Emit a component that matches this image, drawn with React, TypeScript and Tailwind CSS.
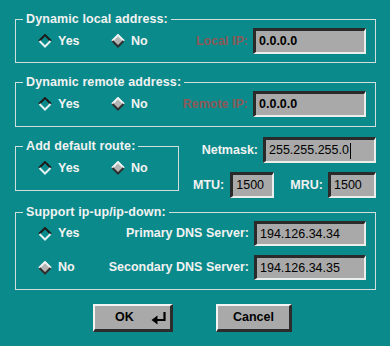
import React from 'react';

function Diamond({ checked }: { checked: boolean }) {
  if (checked) {
    return (
      <svg width="14" height="14" viewBox="0 0 14 14" className="shrink-0">
        <polygon points="7,1 13,7 7,13 1,7" fill="#0a8a8a" />
        <polyline points="1,7 7,1 13,7" fill="none" stroke="#1c1c1c" strokeWidth="2" />
        <polyline points="1.5,7 7,12.5 12.5,7" fill="none" stroke="#e6f2f2" strokeWidth="2" />
      </svg>
    );
  }
  return (
    <svg width="14" height="14" viewBox="0 0 14 14" className="shrink-0">
      <polygon points="7,1 13,7 7,13 1,7" fill="#b4b4b4" />
      <polyline points="1,7 7,1 13,7" fill="none" stroke="#f2f2f2" strokeWidth="2" />
      <polyline points="1.5,7 7,12.5 12.5,7" fill="none" stroke="#2e2e2e" strokeWidth="2" />
    </svg>
  );
}

function Radio({ checked, label, className = '' }: { checked: boolean; label: string; className?: string }) {
  return (
    <div className={`flex items-center ${className}`}>
      <Diamond checked={checked} />
      <span className="ml-[6px] text-[#f2f2f2] font-bold">{label}</span>
    </div>
  );
}

function Field({
  value,
  className = '',
  bold = false,
  cursor = false,
  h = 'h-[26px]',
}: {
  value: string;
  className?: string;
  bold?: boolean;
  cursor?: boolean;
  h?: string;
}) {
  return (
    <div
      className={`flex items-center ${h} bg-[#a9a9a9] border-t-[3px] border-l-[3px] border-t-[#2a2a2a] border-l-[#2a2a2a] border-b-2 border-r-2 border-b-[#ebefeb] border-r-[#ebefeb] pl-[3px] text-black ${
        bold ? 'font-bold' : ''
      } ${className}`}
    >
      <span>{value}</span>
      {cursor && <span className="ml-[1px] inline-block w-[1px] h-[16px] bg-black" />}
    </div>
  );
}

function Group({
  title,
  className = '',
  children,
  pb = 'pb-[8px]',
}: {
  title: string;
  className?: string;
  children: React.ReactNode;
  pb?: string;
}) {
  return (
    <fieldset className={`border border-[#d2dede] pt-[1px] ${pb} ${className}`}>
      <legend className="ml-[7px] px-[3px] h-[15px] leading-[15px] text-[#f2f2f2] font-bold tracking-[0.1px]">
        {title}
      </legend>
      {children}
    </fieldset>
  );
}

function ReturnIcon() {
  return (
    <svg width="16" height="14" viewBox="0 0 16 14">
      <path d="M13.5 1 V9 H5" fill="none" stroke="#000" strokeWidth="2.2" />
      <polygon points="0.5,9 6.5,4.5 6.5,13.5" fill="#000" />
    </svg>
  );
}

function Button({ children, className = '' }: { children: React.ReactNode; className?: string }) {
  return (
    <div
      className={`h-[28px] bg-[#a9a9a9] border-t-2 border-l-2 border-t-[#f4f4f4] border-l-[#f4f4f4] border-b-[3px] border-r-[3px] border-b-[#2c2c2c] border-r-[#2c2c2c] flex items-center text-black font-bold ${className}`}
    >
      {children}
    </div>
  );
}

export default function App() {
  return (
    <div className="w-[390px] h-[346px] bg-[#0a8a8a] pt-[12px] pl-[15px] pr-[14px] font-['Liberation_Sans',Arial,sans-serif] text-[12.5px] overflow-hidden">
      <Group title="Dynamic local address:">
        <div className="flex items-center h-[26px] pl-[22px] pr-[9px]">
          <Radio checked label="Yes" className="w-[73px]" />
          <Radio checked={false} label="No" />
          <span className="ml-auto mr-[5px] text-[#8c5858] font-bold">Local IP:</span>
          <Field value="0.0.0.0" bold className="w-[113px]" />
        </div>
      </Group>

      <Group title="Dynamic remote address:" className="mt-[12px]" pb="pb-[9px]">
        <div className="flex items-center h-[26px] pl-[22px] pr-[9px]">
          <Radio checked label="Yes" className="w-[73px]" />
          <Radio checked={false} label="No" />
          <span className="ml-auto mr-[5px] text-[#8c5858] font-bold">Remote IP:</span>
          <Field value="0.0.0.0" bold className="w-[113px]" />
        </div>
      </Group>

      <div className="flex items-start mt-[10px]">
        <Group title="Add default route:" className="w-[164px] mt-[2px]" pb="pb-[9px]">
          <div className="flex items-center h-[26px] pl-[22px]">
            <Radio checked label="Yes" className="w-[73px]" />
            <Radio checked={false} label="No" />
          </div>
        </Group>
        <div className="flex-1 ml-[14px] flex flex-col">
          <div className="flex items-center justify-end h-[26px]">
            <span className="mr-[5px] text-[#f2f2f2] font-bold">Netmask:</span>
            <Field value="255.255.255.0" cursor className="w-[113px]" />
          </div>
          <div className="flex items-center h-[26px] mt-[9px]">
            <span className="text-[#f2f2f2] font-bold">MTU:</span>
            <Field value="1500" className="w-[44px] ml-[6px]" />
            <span className="ml-auto text-[#f2f2f2] font-bold">MRU:</span>
            <Field value="1500" className="w-[48px] ml-[5px]" />
          </div>
        </div>
      </div>

      <Group title="Support ip-up/ip-down:" className="mt-[7px]" pb="pb-[9px]">
        <div className="flex flex-col pl-[22px] pr-[9px]">
          <div className="flex items-center h-[25px]">
            <Radio checked label="Yes" />
            <span className="ml-auto mr-[5px] text-[#f2f2f2] font-bold">Primary DNS Server:</span>
            <Field value="194.126.34.34" h="h-[25px]" className="w-[112px]" />
          </div>
          <div className="flex items-center h-[25px] mt-[9px]">
            <Radio checked={false} label="No" />
            <span className="ml-auto mr-[5px] text-[#f2f2f2] font-bold">Secondary DNS Server:</span>
            <Field value="194.126.34.35" h="h-[25px]" className="w-[112px]" />
          </div>
        </div>
      </Group>

      <div className="flex mt-[14px]">
        <Button className="ml-[78px] w-[80px] pl-[20px] pr-[3px]">
          <span>OK</span>
          <span className="ml-auto flex">
            <ReturnIcon />
          </span>
        </Button>
        <Button className="ml-[43px] w-[76px] justify-center">
          <span>Cancel</span>
        </Button>
      </div>
    </div>
  );
}
